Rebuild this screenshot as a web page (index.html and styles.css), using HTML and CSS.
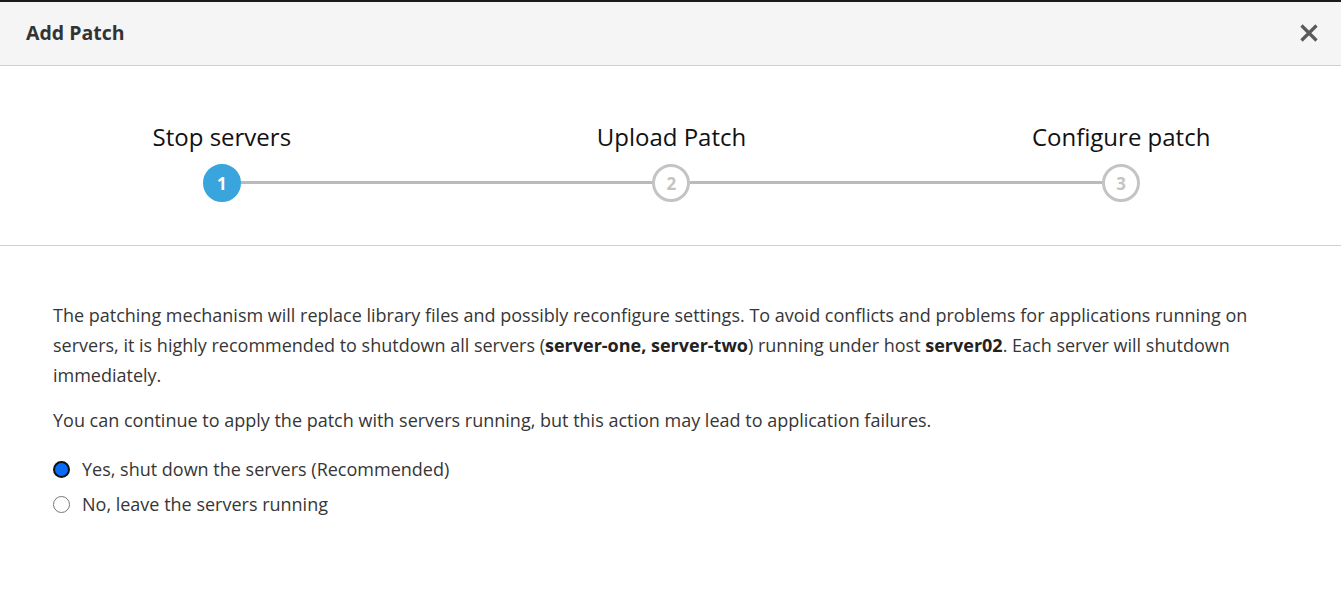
FILE: index.html
```html
<!DOCTYPE html>
<html>
<head>
<meta charset="utf-8">
<link rel="stylesheet" href="styles.css">
</head>
<body>
<div class="modal">
  <header class="modal-header">
    <h1 class="modal-title">Add Patch</h1>
    <button class="close" aria-label="Close">
      <svg width="20" height="20" viewBox="0 0 20 20"><path d="M2.5 2.5 L17.5 17.5 M17.5 2.5 L2.5 17.5" stroke="#5a5a5a" stroke-width="3.2" stroke-linecap="butt"/></svg>
    </button>
  </header>
  <section class="wizard">
    <ol class="steps">
      <li class="step active"><span class="step-label">Stop servers</span><span class="step-circle">1</span></li>
      <li class="step"><span class="step-label">Upload Patch</span><span class="step-circle">2</span></li>
      <li class="step"><span class="step-label">Configure patch</span><span class="step-circle">3</span></li>
    </ol>
  </section>
  <section class="body">
    <p>The patching mechanism will replace library files and possibly reconfigure settings. To avoid conflicts and problems for applications running on servers, it is highly recommended to shutdown all servers (<b>server-one, server-two</b>) running under host <b>server02</b>. Each server will shutdown immediately.</p>
    <p>You can continue to apply the patch with servers running, but this action may lead to application failures.</p>
    <label class="radio"><input type="radio" name="stop" checked><span>Yes, shut down the servers (Recommended)</span></label>
    <label class="radio"><input type="radio" name="stop"><span>No, leave the servers running</span></label>
  </section>
</div>
</body>
</html>
```

FILE: styles.css
```css
* { box-sizing: border-box; }
html, body { margin: 0; padding: 0; background: #fff; }
body { font-family: "Open Sans", "Noto Sans", sans-serif; color: #363636; }
.modal { border-top: 2px solid #1b1b1b; }
.modal-header {
  height: 64px;
  background: #f5f5f5;
  border-bottom: 1px solid #d1d1d1;
  display: flex;
  align-items: center;
  justify-content: space-between;
  padding: 0 22px 0 26px;
}
.modal-title { margin: 0; font-size: 19.5px; font-weight: 700; color: #333; position: relative; top: -1px; }
.close { background: none; border: 0; padding: 0; width: 20px; height: 20px; cursor: pointer; display: flex; position: relative; top: -1px; }
.wizard { border-bottom: 1px solid #d1d1d1; height: 180px; padding-top: 49px; }
.steps {
  list-style: none;
  display: grid; grid-template-columns: repeat(3, 1fr);
  margin: 0 -5px 0 -3px;
  padding: 0;
}
.step { display: flex; flex-direction: column; align-items: center; position: relative; }
.step-label { font-size: 24px; color: #111; line-height: 44px; }
.step-circle {
  margin-top: 5px;
  width: 38px; height: 38px; border-radius: 50%;
  border: 3px solid #c4c4c4; background: #fff;
  color: #c4c4c4; font-weight: 700; font-size: 17px;
  display: flex; align-items: center; justify-content: center;
  position: relative; z-index: 1;
}
.step.active .step-circle { background: #39a5dc; border-color: #39a5dc; color: #fff; }
.step::after {
  content: ""; position: absolute; left: 50%; right: -50%;
  bottom: 18px; height: 3px; background: #bbb;
}
.step:last-child::after { display: none; }
.body { padding: 54px 53px 0 53px; font-size: 18px; line-height: 30px; }
.body p { margin: 0 0 15px 0; }
.body b { color: #222; }
.radio { display: flex; align-items: center; gap: 12px; line-height: 35px; }
.radio:first-of-type { margin-top: 17px; }
.radio input {
  appearance: none; margin: 0; width: 17px; height: 17px; border-radius: 50%;
  border: 1px solid #767676; background: #fff;
}
.radio input:checked { border: 2px solid #111; background: #0a6cf5; }
```
